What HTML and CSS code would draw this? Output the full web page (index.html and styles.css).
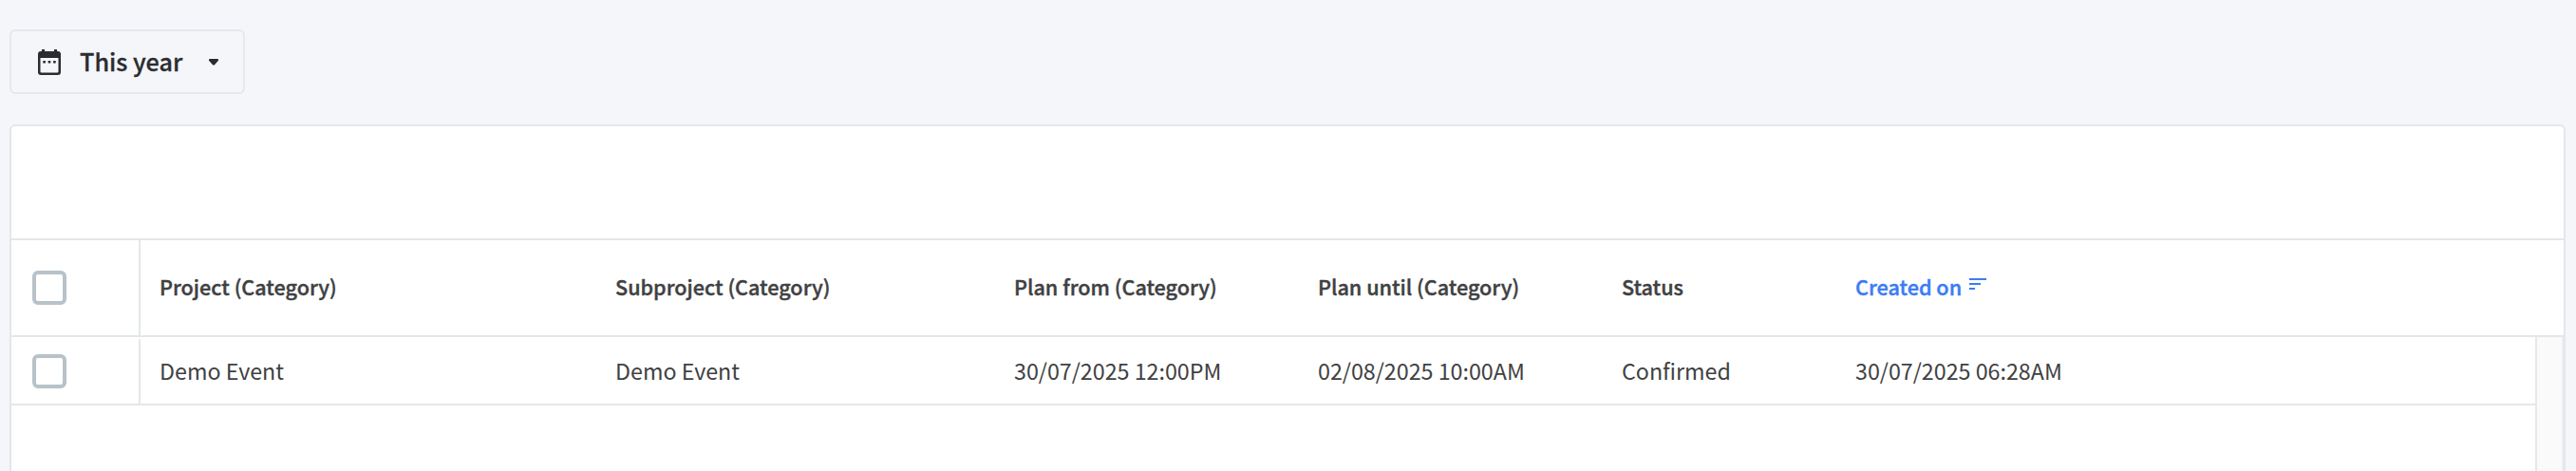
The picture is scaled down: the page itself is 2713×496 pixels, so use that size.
FILE: index.html
```html
<!DOCTYPE html>
<html lang="en">
<head>
    <meta charset="UTF-8">
    <meta name="viewport" content="width=device-width, initial-scale=1.0">
    <title>Planning</title>
    <link rel="stylesheet" href="styles.css">
</head>
<body>

<button class="period-btn" type="button">
    <svg class="calendar-icon" width="24" height="27" viewBox="0 0 24 27">
        <path fill="#2b2c2e" fill-rule="evenodd" d="M4 0h3v2h10V0h3v2h1a3 3 0 0 1 3 3v19a3 3 0 0 1-3 3H3a3 3 0 0 1-3-3V5a3 3 0 0 1 3-3h1zM2.5 9v14.5a1 1 0 0 0 1 1h17a1 1 0 0 0 1-1V9z"/>
        <path fill="#2b2c2e" d="M5.3 12h2.6v2.6H5.3zM10.7 12h2.6v2.6h-2.6zM16.1 12h2.6v2.6h-2.6z"/>
    </svg>
    <span class="period-label">This year</span>
    <svg class="caret-icon" width="10" height="7" viewBox="0 0 10 7">
        <path fill="#2b2c2e" d="M1 0h8q1 0 1 1v.8L6 6.3q-1 .9-2 0L0 1.800V1q0-1 1-1z"/>
    </svg>
</button>

<div class="panel">
    <div class="toolbar"></div>

    <div class="row header">
        <div class="check-cell"><span class="checkbox"></span></div>
        <div class="cell">Project (Category)</div>
        <div class="cell">Subproject (Category)</div>
        <div class="cell">Plan from (Category)</div>
        <div class="cell">Plan until (Category)</div>
        <div class="cell">Status</div>
        <div class="cell sorted">
            <span>Created on</span>
            <svg class="sort-icon" width="18" height="12" viewBox="0 0 18 12">
                <path fill="#3b7cf5" d="M0 0h18v2H0zM0 5h12v2H0zM0 10h6v2H0z"/>
            </svg>
        </div>
    </div>

    <div class="content">
        <div class="rows">
            <div class="row">
                <div class="check-cell"><span class="checkbox"></span></div>
                <div class="cell">Demo Event</div>
                <div class="cell">Demo Event</div>
                <div class="cell">30/07/2025 12:00PM</div>
                <div class="cell">02/08/2025 10:00AM</div>
                <div class="cell">Confirmed</div>
                <div class="cell">30/07/2025 06:28AM</div>
            </div>
        </div>
        <div class="scroll-track"></div>
    </div>
</div>

</body>
</html>
```
FILE: styles.css
```css
* {
    box-sizing: border-box;
}
body {
    display: flex;
    flex-direction: column;
    align-items: flex-start;
    height: 496px;
    margin: 0;
    padding: 31px 11px 0 10px;
    background-color: #f4f6fa;
    color: #3f4142;
    font-family: "Noto Sans CJK SC", "Open Sans", sans-serif;
    font-size: 23.25px;
}
.period-btn {
    display: flex;
    align-items: center;
    flex-shrink: 0;
    width: 248px;
    height: 68px;
    padding: 0 0 0 28px;
    border: 2px solid #e5e8ec;
    border-radius: 6px;
    background-color: #f4f6fa;
    color: #2b2c2e;
    font-family: inherit;
    font-size: 25.2px;
    font-weight: 500;
    line-height: 36px;
}
.period-label {
    width: 108px;
    margin-left: 20px;
    padding-bottom: 2px;
    text-align: left;
    white-space: nowrap;
    -webkit-text-stroke: 0.3px;
}
.caret-icon {
    margin-left: 27.5px;
}
.panel {
    display: flex;
    flex-direction: column;
    flex: 1;
    width: 2692px;
    margin-top: 32px;
    border: 2px solid #e3e7eb;
    border-bottom: none;
    border-radius: 6px 6px 0 0;
    background-color: #fff;
}
.toolbar {
    height: 120px;
    border-bottom: 2px solid #e3e7eb;
}
.row {
    display: grid;
    grid-template-columns: 136px 480px 420px 320px 320px 246px 1fr;
    height: 72px;
    border-bottom: 2px solid #e3e7eb;
}
.header {
    height: 102px;
    font-size: 21.6px;
    font-weight: 500;
    -webkit-text-stroke: 0.4px;
}
.header .cell {
    padding-bottom: 4px;
}
.check-cell {
    display: flex;
    align-items: center;
    padding-left: 22px;
    border-right: 2px solid #e3e7eb;
}
.rows .check-cell {
    margin-top: 2px;
}
.checkbox {
    width: 36px;
    height: 36px;
    border: 4px solid #b7c2c9;
    border-radius: 6px;
}
.cell {
    display: flex;
    align-items: center;
    padding-left: 20px;
    white-space: nowrap;
}
.sorted {
    color: #3b7cf5;
}
.sort-icon {
    margin: 0 0 4px 8px;
}
.content {
    display: flex;
    flex: 1;
}
.rows {
    flex: 1;
}
.scroll-track {
    width: 30px;
    border-left: 2px solid #e6e8ea;
    border-right: 2px solid #ebedee;
    background-color: #fafafa;
}
```
